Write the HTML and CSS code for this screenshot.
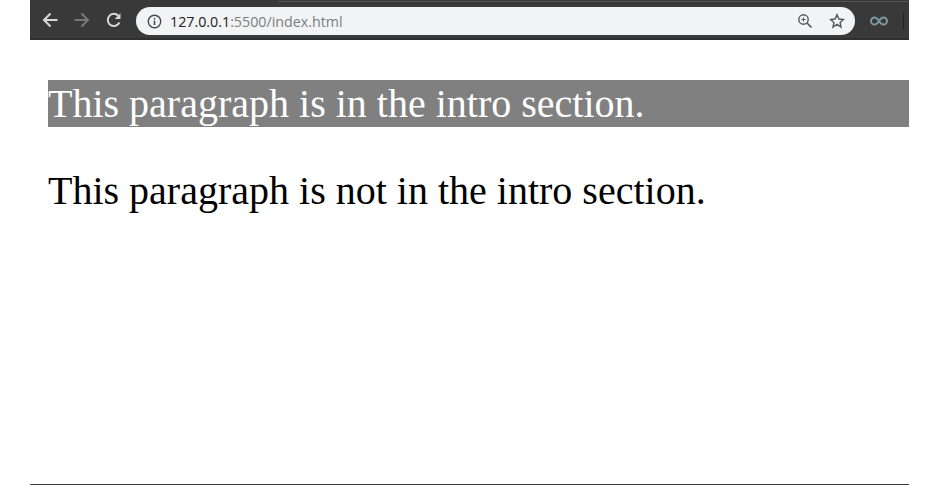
FILE: index.html
```html
<!DOCTYPE html>
<html lang="en">
<head>
    <meta charset="UTF-8">
    <title>Intro section</title>
    <link rel="stylesheet" href="styles.css">
</head>
<body>
    <div class="window">
        <div class="toolbar">
            <div class="tab-edge"></div>
            <svg class="nav-icon" width="18" height="18" viewBox="0 0 18 18"><path d="M16.500 9H3M9.500 2.500L3 9l6.500 6.500" fill="none" stroke="#d6d8da" stroke-width="2"/></svg>
            <svg class="nav-icon" width="18" height="18" viewBox="0 0 18 18"><path d="M1.500 9H15M8.500 2.500L15 9l-6.500 6.500" fill="none" stroke="#77797b" stroke-width="2"/></svg>
            <svg class="nav-icon" width="18" height="18" viewBox="0 0 18 18"><path d="M14.400 11.500A6.100 6.100 0 1 1 13.300 4.700" fill="none" stroke="#d6d8da" stroke-width="2"/><path d="M15.500 2.200V8H9.700z" fill="#d6d8da"/></svg>
            <div class="address">
                <svg class="info-icon" width="15" height="15" viewBox="0 0 15 15"><circle cx="7.500" cy="7.500" r="6.200" fill="none" stroke="#45484b" stroke-width="1.400"/><path d="M7.500 6.500v4.500M7.500 4v1.500" stroke="#45484b" stroke-width="1.500"/></svg>
                <span class="url"><span class="host">127.0.0.1</span>:5500/index.html</span>
                <svg class="zoom-icon" width="16" height="16" viewBox="0 0 16 16"><circle cx="6.500" cy="6.500" r="4.700" fill="none" stroke="#54575a" stroke-width="1.400"/><path d="M10 10l4.500 4.500" stroke="#54575a" stroke-width="1.700"/><path d="M4.400 6.500h4.200M6.500 4.400v4.200" stroke="#54575a" stroke-width="1.100"/></svg>
                <svg class="star-icon" width="16" height="16" viewBox="0 0 16 16"><path d="M8 1.800l1.900 4.200 4.600.5-3.400 3.100.9 4.500L8 11.300l-4 2.800.9-4.500-3.400-3.100 4.600-.5z" fill="none" stroke="#54575a" stroke-width="1.400"/></svg>
            </div>
            <svg class="ext-icon" width="18" height="10" viewBox="0 0 18 10"><path d="M9 5C7.500 2.600 6.200 1.400 4.600 1.400a3.600 3.600 0 0 0 0 7.200C6.200 8.600 7.500 7.400 9 5c1.500-2.400 2.800-3.600 4.400-3.600a3.600 3.600 0 0 1 0 7.200C11.800 8.600 10.500 7.400 9 5z" fill="none" stroke="#7b98a3" stroke-width="2"/></svg>
            <div class="divider"></div>
        </div>
        <div class="page">
            <section class="intro">
                <p>This paragraph is in the intro section.</p>
            </section>
            <p>This paragraph is not in the intro section.</p>
        </div>
    </div>
</body>
</html>
```

FILE: styles.css
```css
html, body {
    margin: 0;
    padding: 0;
    background-color: #fff;
}
.window {
    display: flex;
    flex-direction: column;
    box-sizing: border-box;
    width: 879px;
    height: 485px;
    margin-left: 30px;
    border-bottom: 1px solid #3a3a3a;
}
.toolbar {
    position: relative;
    display: flex;
    align-items: center;
    box-sizing: border-box;
    height: 40px;
    padding: 4px 4px 0 11px;
    background-color: #393939;
    border-bottom: 2px solid #2f2f2f;
}
.tab-edge {
    position: absolute;
    top: 1px;
    left: 248px;
    right: 0;
    height: 1px;
    background-color: #555;
}
.nav-icon {
    flex: none;
    margin-right: 14px;
    margin-bottom: 2px;
}
.nav-icon:nth-of-type(3) {
    margin-right: 13px;
}
.address {
    display: flex;
    align-items: center;
    flex: none;
    box-sizing: border-box;
    width: 719px;
    height: 28px;
    padding: 0 10px 0 11px;
    background-color: #f1f3f4;
    border-radius: 14px;
}
.info-icon {
    flex: none;
}
.url {
    flex: 1;
    margin-left: 8px;
    font-family: "Open Sans", sans-serif;
    font-size: 14.25px;
    color: #7b7e81;
}
.host {
    color: #202124;
}
.zoom-icon {
    margin-right: 16px;
}
.ext-icon {
    margin-left: 15px;
}
.divider {
    width: 1px;
    height: 16px;
    margin-left: 15px;
    background-color: #222;
}
.page {
    flex: 1;
    padding: 0 0 0 18px;
    font-family: "Liberation Serif", serif;
    font-size: 40px;
    color: #000;
}
.page p {
    margin: 40px 0;
}
.intro {
    background-color: #808080;
    color: #fff;
}
.intro p {
    margin: 40px 0 0;
}
```
